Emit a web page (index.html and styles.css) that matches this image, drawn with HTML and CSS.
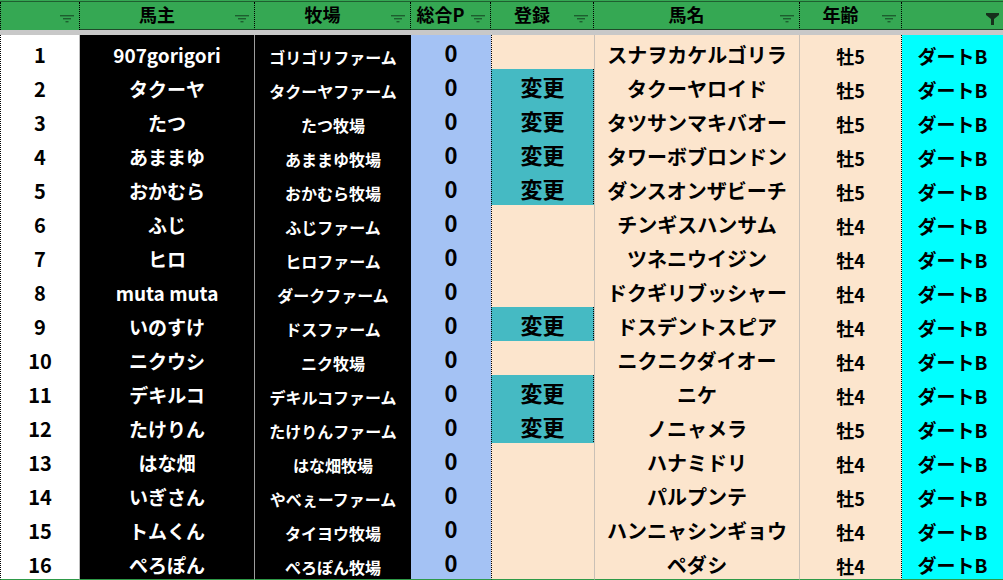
FILE: index.html
```html
<!DOCTYPE html>
<html lang="ja">
<head>
<meta charset="utf-8">
<link rel="stylesheet" href="styles.css">
</head>
<body>
<div class="sheet">
  <div class="topline"></div>
  <div class="row head">
    <div class="h c0"><span class="ht"></span><svg class="fi" viewBox="0 0 14 8"><rect x="0" y="0" width="14" height="1.4"/><rect x="3" y="3" width="8" height="1.4"/><rect x="5.5" y="6" width="3" height="1.4"/></svg></div>
    <div class="h"><span class="ht">馬主</span><svg class="fi" viewBox="0 0 14 8"><rect x="0" y="0" width="14" height="1.4"/><rect x="3" y="3" width="8" height="1.4"/><rect x="5.5" y="6" width="3" height="1.4"/></svg></div>
    <div class="h"><span class="ht">牧場</span><svg class="fi" viewBox="0 0 14 8"><rect x="0" y="0" width="14" height="1.4"/><rect x="3" y="3" width="8" height="1.4"/><rect x="5.5" y="6" width="3" height="1.4"/></svg></div>
    <div class="h"><span class="ht">総合P</span><svg class="fi" viewBox="0 0 14 8"><rect x="0" y="0" width="14" height="1.4"/><rect x="3" y="3" width="8" height="1.4"/><rect x="5.5" y="6" width="3" height="1.4"/></svg></div>
    <div class="h"><span class="ht">登録</span><svg class="fi" viewBox="0 0 14 8"><rect x="0" y="0" width="14" height="1.4"/><rect x="3" y="3" width="8" height="1.4"/><rect x="5.5" y="6" width="3" height="1.4"/></svg></div>
    <div class="h"><span class="ht">馬名</span><svg class="fi" viewBox="0 0 14 8"><rect x="0" y="0" width="14" height="1.4"/><rect x="3" y="3" width="8" height="1.4"/><rect x="5.5" y="6" width="3" height="1.4"/></svg></div>
    <div class="h"><span class="ht">年齢</span><svg class="fi" viewBox="0 0 14 8"><rect x="0" y="0" width="14" height="1.4"/><rect x="3" y="3" width="8" height="1.4"/><rect x="5.5" y="6" width="3" height="1.4"/></svg></div>
    <div class="h last"><span class="ht"></span><svg class="fa" viewBox="0 0 13 12"><path d="M0 0H13V2L8 6V12H5V6L0 2Z"/></svg></div>
  </div>
  <div class="gap"></div>
  <div class="body">
    <div class="row"><div class="c num">1</div><div class="c own">907gorigori</div><div class="c farm">ゴリゴリファーム</div><div class="c pt">0</div><div class="c reg"></div><div class="c name">スナヲカケルゴリラ</div><div class="c age">牡5</div><div class="c cls">ダートB</div></div>
    <div class="row"><div class="c num">2</div><div class="c own">タクーヤ</div><div class="c farm">タクーヤファーム</div><div class="c pt">0</div><div class="c reg on">変更</div><div class="c name">タクーヤロイド</div><div class="c age">牡5</div><div class="c cls">ダートB</div></div>
    <div class="row"><div class="c num">3</div><div class="c own">たつ</div><div class="c farm">たつ牧場</div><div class="c pt">0</div><div class="c reg on">変更</div><div class="c name">タツサンマキバオー</div><div class="c age">牡5</div><div class="c cls">ダートB</div></div>
    <div class="row"><div class="c num">4</div><div class="c own">あままゆ</div><div class="c farm">あままゆ牧場</div><div class="c pt">0</div><div class="c reg on">変更</div><div class="c name">タワーボブロンドン</div><div class="c age">牡5</div><div class="c cls">ダートB</div></div>
    <div class="row"><div class="c num">5</div><div class="c own">おかむら</div><div class="c farm">おかむら牧場</div><div class="c pt">0</div><div class="c reg on">変更</div><div class="c name">ダンスオンザビーチ</div><div class="c age">牡5</div><div class="c cls">ダートB</div></div>
    <div class="row"><div class="c num">6</div><div class="c own">ふじ</div><div class="c farm">ふじファーム</div><div class="c pt">0</div><div class="c reg"></div><div class="c name">チンギスハンサム</div><div class="c age">牡4</div><div class="c cls">ダートB</div></div>
    <div class="row"><div class="c num">7</div><div class="c own">ヒロ</div><div class="c farm">ヒロファーム</div><div class="c pt">0</div><div class="c reg"></div><div class="c name">ツネニウイジン</div><div class="c age">牡4</div><div class="c cls">ダートB</div></div>
    <div class="row"><div class="c num">8</div><div class="c own">muta muta</div><div class="c farm">ダークファーム</div><div class="c pt">0</div><div class="c reg"></div><div class="c name">ドクギリブッシャー</div><div class="c age">牡4</div><div class="c cls">ダートB</div></div>
    <div class="row"><div class="c num">9</div><div class="c own">いのすけ</div><div class="c farm">ドスファーム</div><div class="c pt">0</div><div class="c reg on">変更</div><div class="c name">ドスデントスピア</div><div class="c age">牡4</div><div class="c cls">ダートB</div></div>
    <div class="row"><div class="c num">10</div><div class="c own">ニクウシ</div><div class="c farm">ニク牧場</div><div class="c pt">0</div><div class="c reg"></div><div class="c name">ニクニクダイオー</div><div class="c age">牡4</div><div class="c cls">ダートB</div></div>
    <div class="row"><div class="c num">11</div><div class="c own">デキルコ</div><div class="c farm">デキルコファーム</div><div class="c pt">0</div><div class="c reg on">変更</div><div class="c name">ニケ</div><div class="c age">牡4</div><div class="c cls">ダートB</div></div>
    <div class="row"><div class="c num">12</div><div class="c own">たけりん</div><div class="c farm">たけりんファーム</div><div class="c pt">0</div><div class="c reg on">変更</div><div class="c name">ノニャメラ</div><div class="c age">牡5</div><div class="c cls">ダートB</div></div>
    <div class="row"><div class="c num">13</div><div class="c own">はな畑</div><div class="c farm">はな畑牧場</div><div class="c pt">0</div><div class="c reg"></div><div class="c name">ハナミドリ</div><div class="c age">牡4</div><div class="c cls">ダートB</div></div>
    <div class="row"><div class="c num">14</div><div class="c own">いぎさん</div><div class="c farm">やべぇーファーム</div><div class="c pt">0</div><div class="c reg"></div><div class="c name">パルプンテ</div><div class="c age">牡5</div><div class="c cls">ダートB</div></div>
    <div class="row"><div class="c num">15</div><div class="c own">トムくん</div><div class="c farm">タイヨウ牧場</div><div class="c pt">0</div><div class="c reg"></div><div class="c name">ハンニャシンギョウ</div><div class="c age">牡4</div><div class="c cls">ダートB</div></div>
    <div class="row"><div class="c num">16</div><div class="c own">ぺろぽん</div><div class="c farm">ぺろぽん牧場</div><div class="c pt">0</div><div class="c reg"></div><div class="c name">ペダシ</div><div class="c age">牡4</div><div class="c cls">ダートB</div></div>
  </div>
</div>
</body>
</html>
```
FILE: styles.css
```css
* { box-sizing: border-box; }
html, body { margin: 0; padding: 0; background: #ffffff; }
body {
  font-family: "Noto Sans CJK JP", "Noto Sans", sans-serif;
  font-weight: 700;
  color: #000;
  overflow: hidden;
}
.sheet { width: 1003px; height: 580px; overflow: hidden; }
.topline { height: 2px; background: #35a853; border-bottom: 1px solid #1f5f30; }
.row {
  display: grid;
  grid-template-columns: 80px 175px 156px 80px 103px 206px 102px 101px;
}
.head { height: 28px; background: #35a853; }
.h {
  position: relative;
  display: flex;
  align-items: center;
  padding-right: 20px;
  border-right: 1px dotted #000;
  border-bottom: 1px solid #1f4a2a;
}
.h.c0 { border-left: 1px dotted #000; border-bottom: none; }
.h.last { border-right: none; }
.ht { flex: 1; text-align: center; font-size: 18px; line-height: 20px; margin-top: -4px; }
.fi {
  position: absolute;
  right: 5px;
  top: 13px;
  width: 14px;
  height: 8px;
  fill: #1d5e2f;
}
.fa {
  position: absolute;
  right: 4px;
  top: 11px;
  width: 13px;
  height: 12px;
  fill: #16301c;
}
.gap { height: 5px; background: #c8c8c8; }
.body .row { height: 34px; }
.c {
  display: flex;
  align-items: center;
  justify-content: center;
  white-space: nowrap;
  border-bottom: 1px solid #c6c6c6;
  padding-top: 6px;
  line-height: 24px;
}
.num { background: #fff; border-left: 1px dotted #000; border-right: 1px solid #bdbdbd; border-bottom-color: #d6d6d6; font-size: 20px; }
.own { background: #000; color: #fff; font-size: 19px; border-right: 1px solid #9d9d9d; border-bottom-color: #9d9d9d; }
.farm { background: #000; color: #fff; font-size: 16px; padding-top: 10px; border-bottom-color: #9d9d9d; }
.pt { background: #a4c2f4; font-size: 22px; padding-top: 0; border-bottom-color: #8fa9d6; }
.reg { background: #fce5cd; border-left: 1px dotted #000; border-bottom: 1px dotted #fce5cd; font-size: 22px; font-weight: 700; padding-top: 0; }
.reg.on { background: #45bac3; border: 1px dotted #000; border-top: none; }
.name { background: #fce5cd; font-size: 20px; border-left: 1px solid #c9c0b6; border-right: 1px solid #c9c0b6; border-bottom-color: #c9c0b6; }
.age { background: #fce5cd; font-size: 18px; padding-top: 8px; border-bottom: 1px dotted #000; border-right: 1px dotted #000; }
.cls { background: #00ffff; font-size: 19px; border-bottom: none; }
.body .row:last-child .c { border-bottom: 1px solid #2e9a47; }
```
